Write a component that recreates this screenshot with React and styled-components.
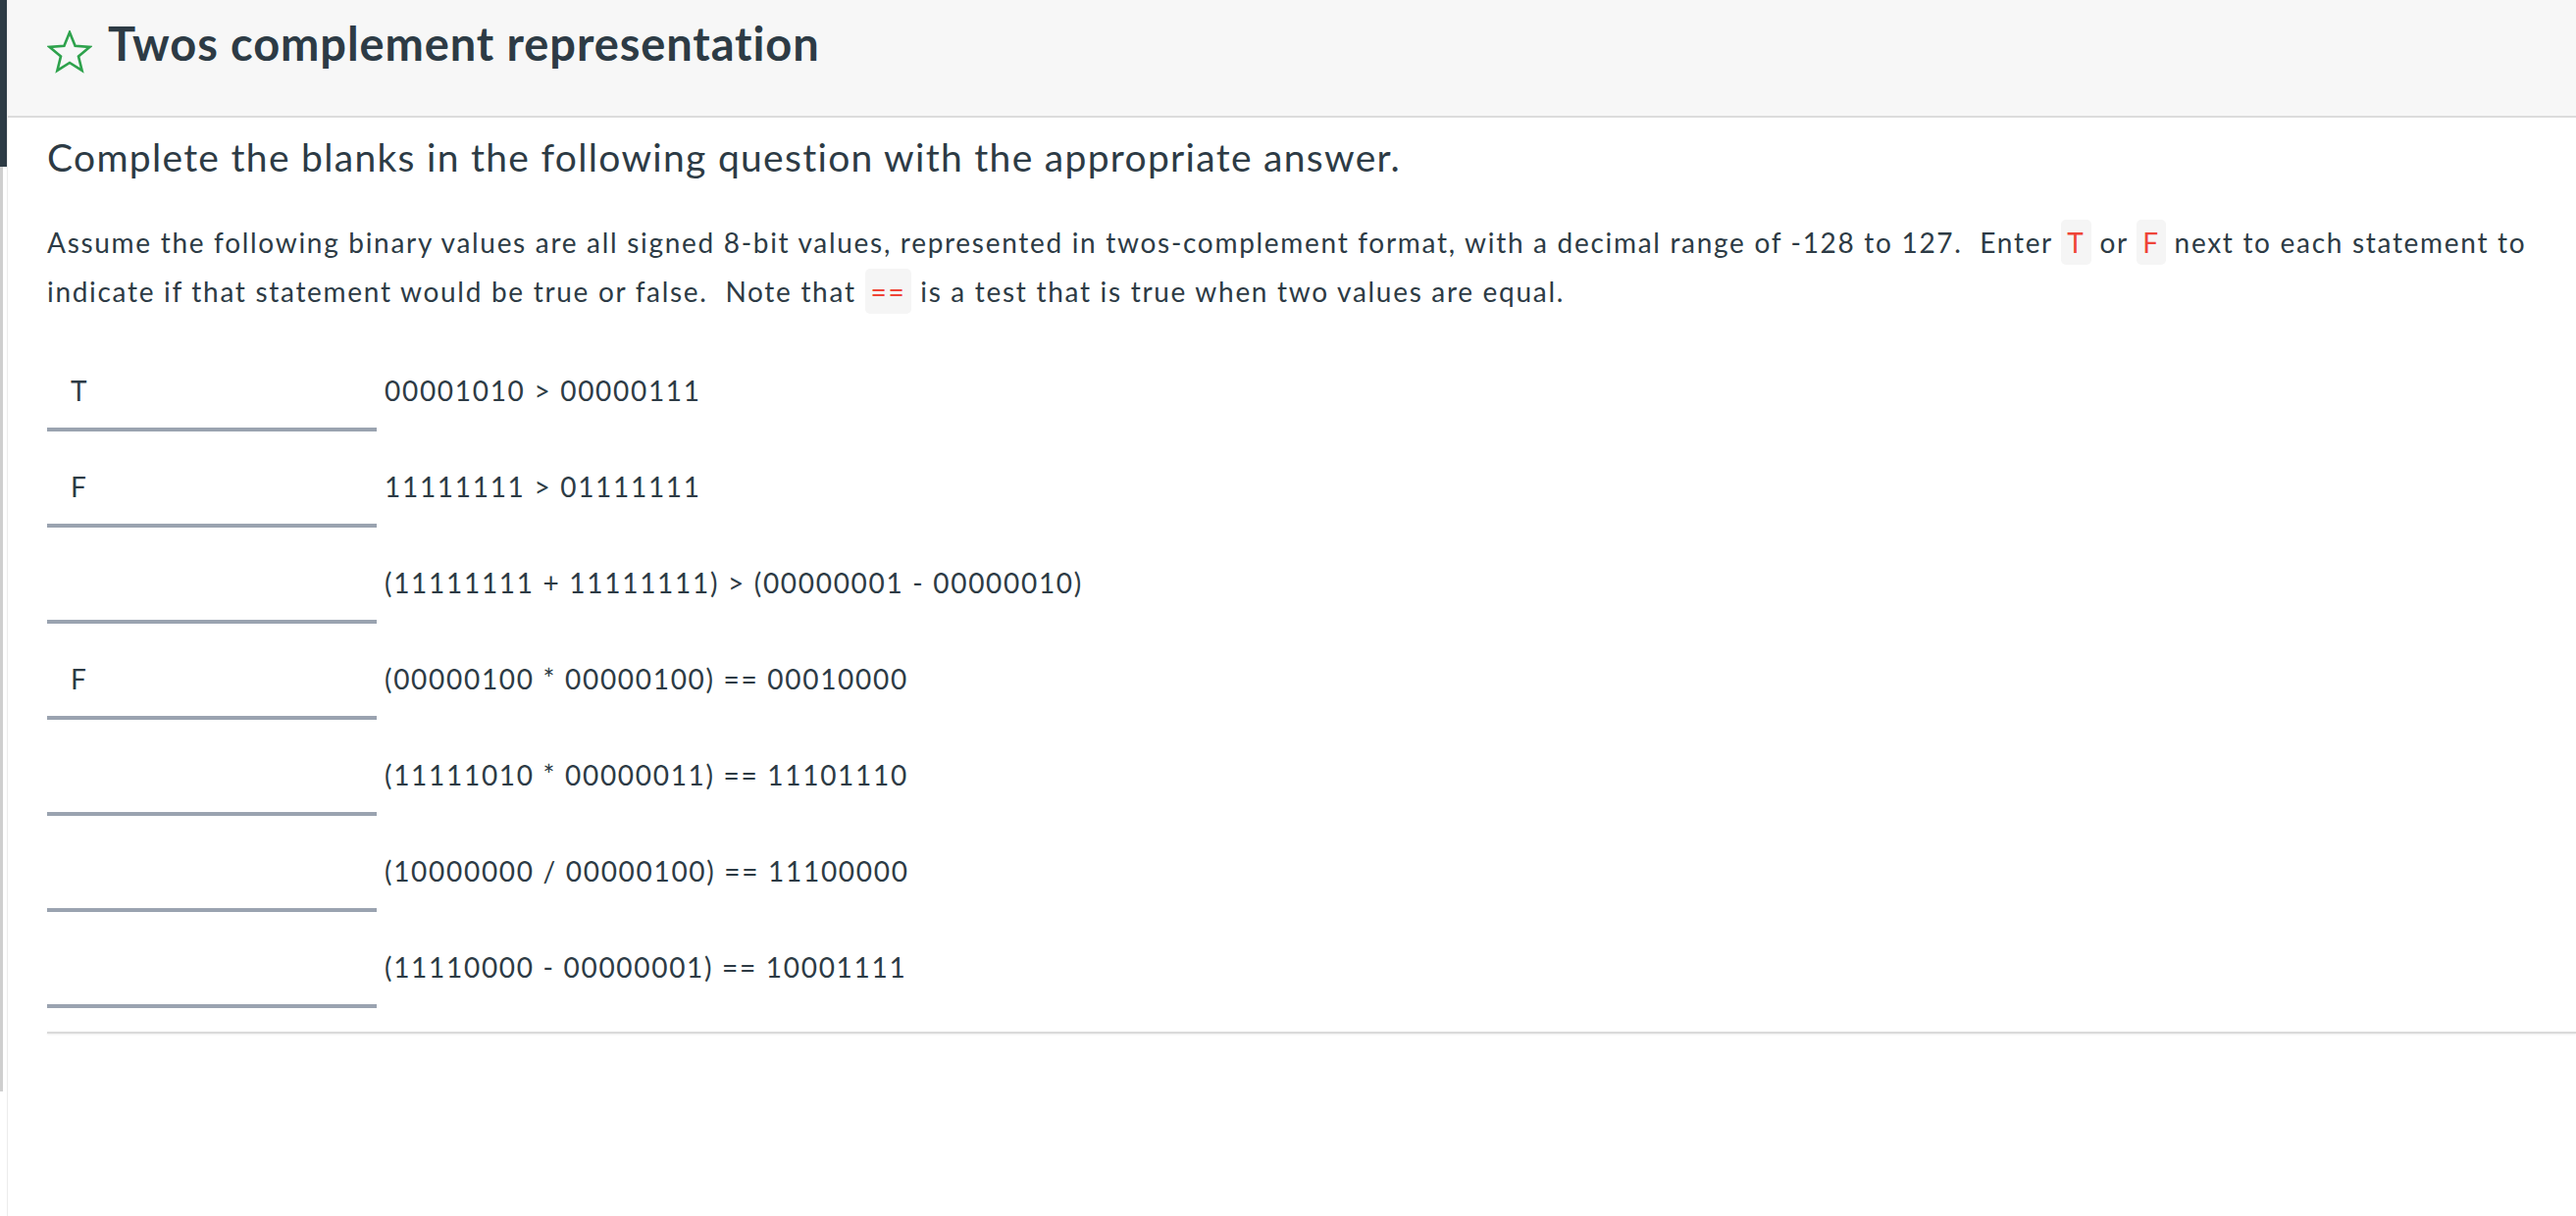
import React from 'react';
import styled, { createGlobalStyle } from 'styled-components';

const GlobalStyle = createGlobalStyle`
  html, body {
    margin: 0;
    padding: 0;
    background: #ffffff;
  }
  body {
    font-family: Lato, 'Noto Sans', sans-serif;
    color: #2d3b45;
  }
`;

const Page = styled.div`
  display: flex;
  min-height: 1240px;
`;

const Rail = styled.div`
  width: 7px;
  flex: none;
  display: flex;
  flex-direction: column;
`;

const RailTop = styled.div`
  height: 170px;
  background: #2d3b45;
`;

const RailLine = styled.div`
  width: 3px;
  height: 943px;
  background: #cfcfcf;
`;

const Main = styled.div`
  flex: 1;
  min-width: 0;
  border-left: 1px solid #ececec;
`;

const Header = styled.header`
  display: flex;
  align-items: flex-start;
  gap: 16px;
  height: 120px;
  box-sizing: border-box;
  padding: 21px 40px 0 40px;
  background: #f7f7f7;
  border-bottom: 2px solid #dcdcdc;
`;

const StarIcon = styled.svg`
  width: 46px;
  height: 44px;
  margin-top: 10px;
  flex: none;
`;

const Title = styled.h1`
  margin: 0;
  font-size: 47px;
  line-height: 1;
  font-weight: 700;
  letter-spacing: 0.9px;
  color: #2d3b45;
`;

const Body = styled.section`
  padding-left: 40px;
`;

const Prompt = styled.h2`
  margin: 17px 0 0;
  font-size: 39px;
  font-weight: 400;
  line-height: 1.2;
  letter-spacing: 1.3px;
  color: #2d3b45;
`;

const Instructions = styled.p`
  margin: 38px 0 0;
  padding-right: 40px;
  font-size: 28px;
  line-height: 50px;
  font-weight: 400;
  letter-spacing: 1.7px;
  color: #2d3b45;
`;

const Code = styled.code`
  font-family: inherit;
  font-size: inherit;
  color: #ef4437;
  background: #f5f5f5;
  border-radius: 5px;
  padding: 6px 6px;
`;

const Rows = styled.div`
  display: flex;
  flex-direction: column;
  gap: 38px;
  margin-top: 58px;
`;

const Row = styled.div`
  display: flex;
  align-items: flex-start;
  gap: 8px;
`;

const Blank = styled.div`
  width: 336px;
  height: 60px;
  box-sizing: border-box;
  padding: 2px 24px 0;
  border-bottom: 4px solid #9aa3b0;
  font-size: 28px;
  font-weight: 400;
  line-height: 1.2;
  color: #2d3b45;
`;

const Statement = styled.div`
  padding-top: 2px;
  font-size: 28px;
  font-weight: 400;
  line-height: 1.2;
  letter-spacing: 1.7px;
  color: #2d3b45;
`;

const Divider = styled.hr`
  margin: 24px 0 0;
  border: 0;
  height: 2px;
  background: #dadada;
  box-shadow: 0 1px 2px rgba(0, 0, 0, 0.08);
`;

const rows = [
  { answer: 'T', text: '00001010 > 00000111' },
  { answer: 'F', text: '11111111 > 01111111' },
  { answer: '', text: '(11111111 + 11111111) > (00000001 - 00000010)' },
  { answer: 'F', text: '(00000100 * 00000100) == 00010000' },
  { answer: '', text: '(11111010 * 00000011) == 11101110' },
  { answer: '', text: '(10000000 / 00000100) == 11100000' },
  { answer: '', text: '(11110000 - 00000001) == 10001111' },
];

const Star = () => (
  <StarIcon viewBox="0 0 46 44">
    <polygon
      points="23,2 28.6,15.8 43.4,16.9 32,26.4 35.6,40.9 23,33 10.4,40.9 14,26.4 2.6,16.9 17.4,15.8"
      fill="none"
      stroke="#2ea24c"
      strokeWidth="2.6"
      strokeLinejoin="miter"
    />
  </StarIcon>
);

export default function App() {
  return (
    <>
      <GlobalStyle />
      <Page>
        <Rail>
          <RailTop />
          <RailLine />
        </Rail>
        <Main>
          <Header>
            <Star />
            <Title>Twos complement representation</Title>
          </Header>
          <Body>
            <Prompt>Complete the blanks in the following question with the appropriate answer.</Prompt>
            <Instructions>
              Assume the following binary values are all signed 8-bit values, represented in
              twos-complement format, with a decimal range of -128 to 127.{'\u00a0'} Enter{' '}
              <Code>T</Code> or <Code>F</Code> next to each statement to indicate if that statement
              would be true or false.{'\u00a0'} Note that <Code>==</Code> is a test that is true
              when two values are equal.
            </Instructions>
            <Rows>
              {rows.map((r, i) => (
                <Row key={i}>
                  <Blank>{r.answer}</Blank>
                  <Statement>{r.text}</Statement>
                </Row>
              ))}
            </Rows>
            <Divider />
          </Body>
        </Main>
      </Page>
    </>
  );
}
